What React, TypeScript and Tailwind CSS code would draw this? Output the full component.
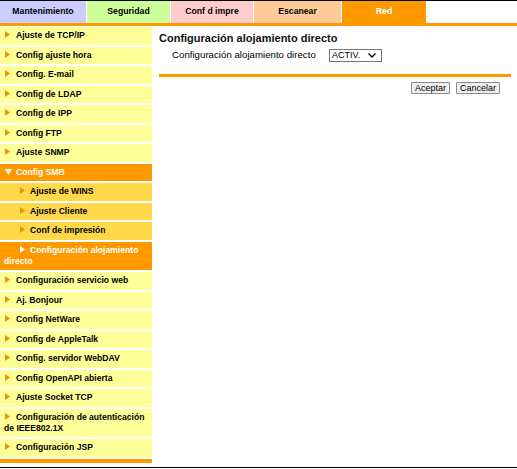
const tabs = [
  { label: "Mantenimiento", cls: "w-[86px] bg-[#ccccff] text-black" },
  { label: "Seguridad", cls: "w-[83px] bg-[#ccff99] text-black" },
  { label: "Conf d impre", cls: "w-[82px] bg-[#ffcccc] text-black" },
  { label: "Escanear", cls: "w-[87px] bg-[#ffcc99] text-black" },
  { label: "Red", cls: "w-[84px] bg-[#ff9900] text-white" },
];

type Item = { label: string; kind: "main" | "open" | "sub" | "active" };

const items: Item[] = [
  { label: "Ajuste de TCP/IP", kind: "main" },
  { label: "Config ajuste hora", kind: "main" },
  { label: "Config. E-mail", kind: "main" },
  { label: "Config de LDAP", kind: "main" },
  { label: "Config de IPP", kind: "main" },
  { label: "Config FTP", kind: "main" },
  { label: "Ajuste SNMP", kind: "main" },
  { label: "Config SMB", kind: "open" },
  { label: "Ajuste de WINS", kind: "sub" },
  { label: "Ajuste Cliente", kind: "sub" },
  { label: "Conf de impresión", kind: "sub" },
  { label: "Configuración alojamiento directo", kind: "active" },
  { label: "Configuración servicio web", kind: "main" },
  { label: "Aj. Bonjour", kind: "main" },
  { label: "Config NetWare", kind: "main" },
  { label: "Config de AppleTalk", kind: "main" },
  { label: "Config. servidor WebDAV", kind: "main" },
  { label: "Config OpenAPI abierta", kind: "main" },
  { label: "Ajuste Socket TCP", kind: "main" },
  { label: "Configuración de autenticación de IEEE802.1X", kind: "main" },
  { label: "Configuración JSP", kind: "main" },
];

const Arrow = ({ color }: { color: string }) => (
  <svg width="5" height="7" viewBox="0 0 5 7" className="inline-block align-[0px]">
    <path d="M0 0 L5 3.5 L0 7 Z" fill={color} />
  </svg>
);

const Down = () => (
  <svg width="7" height="6" viewBox="0 0 7 6" className="inline-block align-[0px]">
    <path d="M0 0 L7 0 L3.5 6 Z" fill="#ffffff" />
  </svg>
);

const NavItem = ({ item }: { item: Item }) => {
  const bg =
    item.kind === "main"
      ? "bg-[#ffff99] text-black"
      : item.kind === "sub"
        ? "bg-[#ffd94a] text-black"
        : "bg-[#ff9900] text-white";
  return (
    <div className={`${bg} pl-[4px] pr-[2px] py-[3.25px] leading-[11px] text-[8.6px] font-bold`}>
      {item.kind === "main" && (
        <span className="ml-[1px] mr-[6px]">
          <Arrow color="#f29100" />
        </span>
      )}
      {item.kind === "open" && (
        <span className="ml-[1px] mr-[4px]">
          <Down />
        </span>
      )}
      {item.kind === "sub" && (
        <span className="ml-[16px] mr-[5px]">
          <Arrow color="#f29100" />
        </span>
      )}
      {item.kind === "active" && (
        <span className="ml-[16px] mr-[5px]">
          <Arrow color="#ffffff" />
        </span>
      )}
      {item.label}
    </div>
  );
};

export default function App() {
  return (
    <div className="w-[517px] h-[469px] bg-white font-['Liberation_Sans',Arial,sans-serif]">
      <div className="h-[468px] border-t border-b border-black flex flex-col">
        {/* tabs */}
        <div className="flex h-[22px] gap-[1px]">
          {tabs.map((t) => (
            <div
              key={t.label}
              className={`${t.cls} flex items-center justify-center text-[8.7px] font-bold`}
            >
              {t.label}
            </div>
          ))}
        </div>
        <div className="h-[3px] bg-[#ff9900]" />

        <div className="flex flex-1">
          {/* sidebar */}
          <div className="w-[152px] pt-[1px] flex flex-col">
            <div className="flex flex-col gap-[2px]">
              {items.map((it) => (
                <NavItem key={it.label} item={it} />
              ))}
            </div>
            <div className="mt-[2.5px] h-[3.5px] bg-[#ff9900]" />
          </div>

          {/* content */}
          <div className="ml-[7px] w-[352px] pt-[6px]">
            <h1 className="text-[11px] leading-[13px] font-bold text-[#111]">
              Configuración alojamiento directo
            </h1>
            <div className="mt-[4px] flex items-center h-[13px] pl-[13px]">
              <span className="text-[9.7px] text-black w-[157px]">Configuración alojamiento directo</span>
              <div className="w-[53px] h-[13px] border border-[#767676] bg-white flex items-center justify-between pl-[2px] pr-[5px]">
                <span className="text-[9px] leading-[11px] text-black">ACTIV.</span>
                <svg width="8" height="5" viewBox="0 0 8 5">
                  <path d="M0.5 0.5 L4 4 L7.5 0.5" stroke="#000" strokeWidth="1.3" fill="none" />
                </svg>
              </div>
            </div>
            <div className="mt-[12px] h-[3px] bg-[#ff9900]" />
            <div className="mt-[5px] flex justify-end gap-[6px] pr-[11px]">
              <button className="h-[12px] px-[3px] bg-[#efefef] border border-[#8a8a8a] rounded-[1px] text-[9px] leading-[10px] text-black">
                Aceptar
              </button>
              <button className="h-[12px] px-[3px] bg-[#efefef] border border-[#8a8a8a] rounded-[1px] text-[9px] leading-[10px] text-black">
                Cancelar
              </button>
            </div>
          </div>
        </div>
      </div>
    </div>
  );
}
